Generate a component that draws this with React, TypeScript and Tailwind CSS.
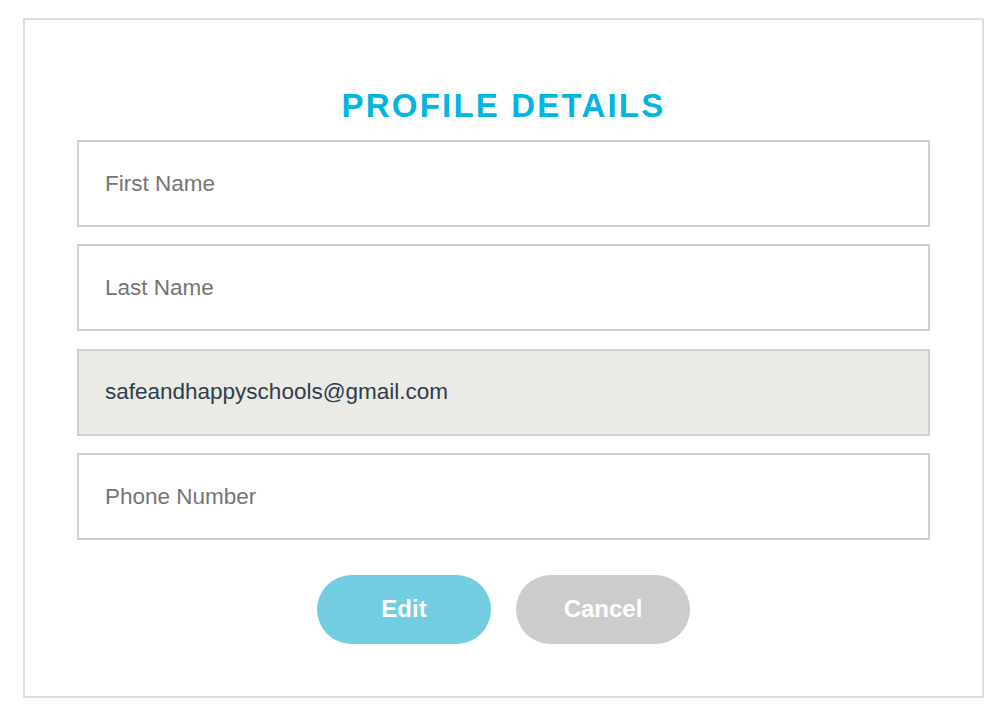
export default function App() {
  const fields = [
    { label: "First Name", value: "", disabled: false },
    { label: "Last Name", value: "", disabled: false },
    { label: "Email", value: "safeandhappyschools@gmail.com", disabled: true },
    { label: "Phone Number", value: "", disabled: false },
  ];

  return (
    <div className="w-[999px] h-[707px] bg-white pt-[18px] pl-[23px]" style={{ fontFamily: '"Liberation Sans", Arial, sans-serif' }}>
      <div className="w-[961px] h-[680px] border-2 border-[#e0e0e0] px-[52px] pt-[68px]">
        <h1 className="text-center text-[33px] leading-[36px] font-bold tracking-[2.2px] text-[#00b5e2]">
          PROFILE DETAILS
        </h1>
        <div className="mt-[16px] flex flex-col gap-[17.3px]">
          {fields.map((f) => (
            <div
              key={f.label}
              className={
                "h-[87px] border-2 border-[#cfcfcf] flex items-center px-[26px] text-[22.5px] " +
                (f.disabled ? "bg-[#ebeae4] text-[#2c3e50]" : "bg-white text-[#757575]")
              }
            >
              {f.value || f.label}
            </div>
          ))}
        </div>
        <div className="mt-[35px] flex justify-center gap-[25px]">
          <button className="w-[174px] h-[69px] rounded-full bg-[#72cde0] text-white text-[24px] font-bold">
            Edit
          </button>
          <button className="w-[174px] h-[69px] rounded-full bg-[#cccccc] text-white text-[24px] font-bold">
            Cancel
          </button>
        </div>
      </div>
    </div>
  );
}
